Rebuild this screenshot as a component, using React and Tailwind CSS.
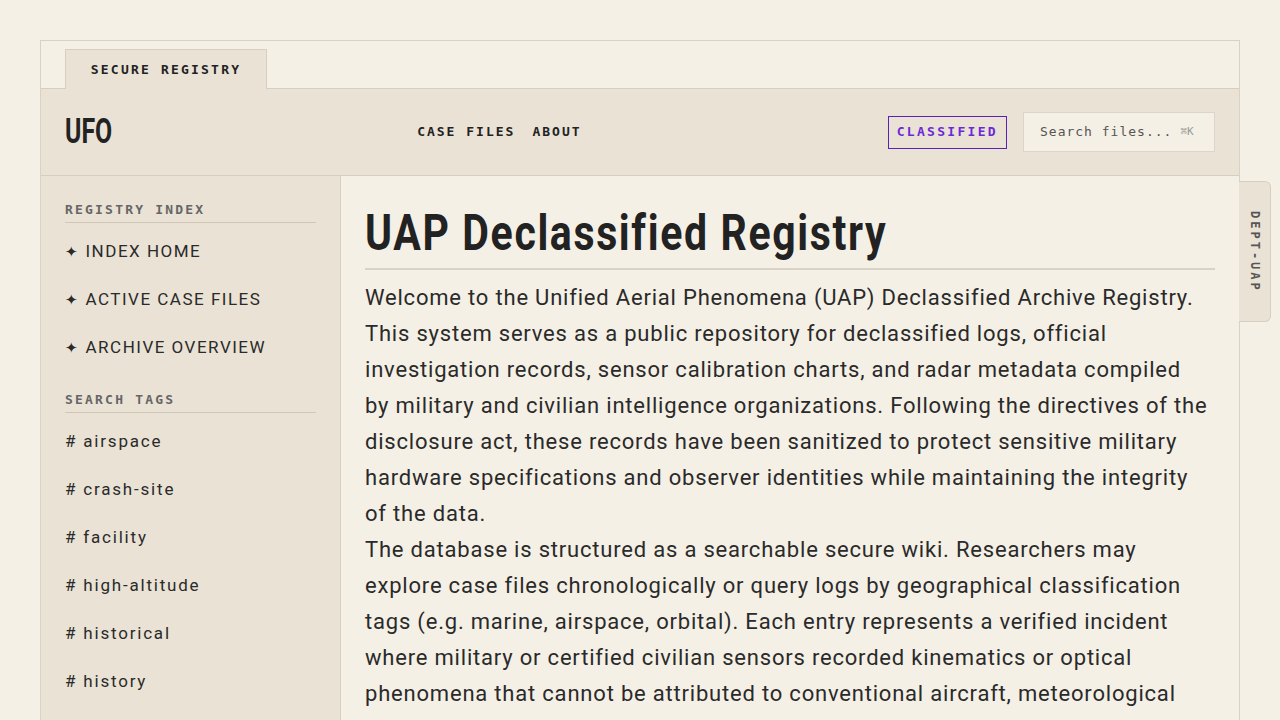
export default function App() {
  const mono = { fontFamily: '"DejaVu Sans Mono", "Liberation Mono", monospace' };
  const cond = { fontFamily: 'Roboto, "Liberation Sans", sans-serif' };
  const body = { fontFamily: 'Roboto, "Noto Sans", sans-serif' };
  const indexItems = ['INDEX HOME', 'ACTIVE CASE FILES', 'ARCHIVE OVERVIEW'];
  const tags = ['airspace', 'crash-site', 'facility', 'high-altitude', 'historical', 'history', 'marine', 'orbital'];
  return (
    <div className="min-h-screen bg-[#f5f0e6] px-10 pt-10 text-[#232323]" style={body}>
      <div className="relative border border-[#d9d2c3]">
        {/* tab row */}
        <div className="flex h-12 items-end border-b border-[#d6cfc0] pl-6">
          <div
            className="-mb-px flex h-[40px] w-[202px] items-center justify-center border border-b-0 border-[#d6cfc0] bg-[#e9e2d5] text-[13px] font-bold tracking-[2.2px] text-[#222]"
            style={mono}
          >
            SECURE REGISTRY
          </div>
        </div>
        {/* header */}
        <div className="flex h-[87px] items-center justify-between border-b border-[#d6cfc0] bg-[#e9e2d5] px-6">
          <div className="w-[46px]">
            <span
              className="inline-block origin-left scale-x-[0.71] text-[35px] font-bold leading-none text-[#222]"
              style={cond}
            >
              UFO
            </span>
          </div>
          <nav className="flex gap-[17px] text-[13px] font-bold tracking-[2px] text-[#222]" style={mono}>
            <span>CASE FILES</span>
            <span>ABOUT</span>
          </nav>
          <div className="flex items-center gap-4">
            <div
              className="flex h-[33px] items-center border border-[#5b21b6] px-2 text-[13px] font-bold tracking-[2.3px] text-[#6d28d9]"
              style={mono}
            >
              CLASSIFIED
            </div>
            <div
              className="flex h-10 w-[192px] items-center gap-2 border border-[#dcd6ca] bg-[#f5f0e6] px-4 text-[13px] tracking-[1px] text-[#555]"
              style={mono}
            >
              <span>Search files...</span>
              <span className="text-[11px] tracking-normal text-[#999]">⌘K</span>
            </div>
          </div>
        </div>
        {/* body */}
        <div className="flex">
          <aside className="w-[300px] shrink-0 border-r border-[#d6cfc0] bg-[#e9e2d5] px-6 pt-[26px] pb-10">
            <div className="border-b border-[#cfc7b8] pb-[4px] text-[13px] font-bold leading-4 tracking-[2.2px] text-[#666]" style={mono}>
              REGISTRY INDEX
            </div>
            <ul className="mt-[5px]">
              {indexItems.map((t) => (
                <li key={t} className="flex h-12 items-center text-[17px] tracking-[1.5px] text-[#2a2a2a]">
                  <span className="mr-[6px] text-[15px]">✦</span>
                  {t}
                </li>
              ))}
            </ul>
            <div className="mt-5 border-b border-[#cfc7b8] pb-[4px] text-[13px] font-bold leading-4 tracking-[2.2px] text-[#666]" style={mono}>
              SEARCH TAGS
            </div>
            <ul className="mt-[5px]">
              {tags.map((t) => (
                <li key={t} className="flex h-12 items-center text-[17px] tracking-[1.8px] text-[#2a2a2a]">
                  # {t}
                </li>
              ))}
            </ul>
          </aside>
          <main className="min-w-0 flex-1 bg-[#f5f0e6] px-6 pt-[27px]">
            <h1 className="border-b-2 border-[#d9d3c5] pb-[5px] text-[50px] font-bold leading-[60px] text-[#222]" style={cond}>
              <span className="inline-block origin-left scale-x-[0.82] whitespace-nowrap tracking-[2px]">UAP Declassified Registry</span>
            </h1>
            <div className="mt-[10px] text-[22px] leading-[36px] tracking-[0.8px] text-[#2a2a2a]">
              <p>
                Welcome to the Unified Aerial Phenomena (UAP) Declassified Archive Registry.
                <br />
                This system serves as a public repository for declassified logs, official
                <br />
                investigation records, sensor calibration charts, and radar metadata compiled
                <br />
                by military and civilian intelligence organizations. Following the directives of the
                <br />
                disclosure act, these records have been sanitized to protect sensitive military
                <br />
                hardware specifications and observer identities while maintaining the integrity
                <br />
                of the data.
              </p>
              <p>
                The database is structured as a searchable secure wiki. Researchers may
                <br />
                explore case files chronologically or query logs by geographical classification
                <br />
                tags (e.g. marine, airspace, orbital). Each entry represents a verified incident
                <br />
                where military or certified civilian sensors recorded kinematics or optical
                <br />
                phenomena that cannot be attributed to conventional aircraft, meteorological
                <br />
                events, or known orbital objects.
              </p>
            </div>
          </main>
        </div>
        {/* side tab */}
        <div className="absolute left-full top-[140px] flex h-[141px] w-[32px] items-center justify-center rounded-r-md border border-l-0 border-[#d6cfc0] bg-[#e9e2d5]">
          <span className="text-[12px] font-bold tracking-[3px] text-[#555] [writing-mode:vertical-rl]" style={mono}>
            DEPT-UAP
          </span>
        </div>
      </div>
    </div>
  );
}
